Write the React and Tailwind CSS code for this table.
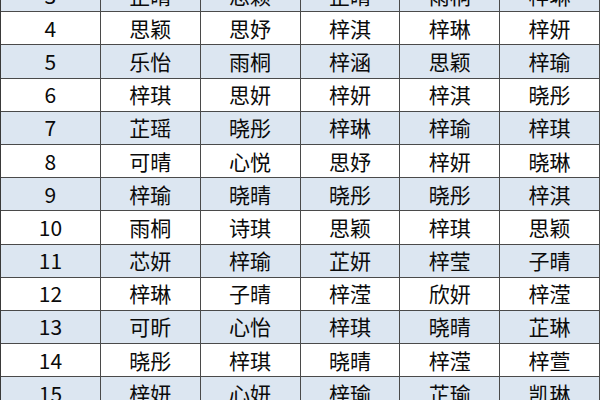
import React from "react";

const rows = [
  [3, "芷晴", "思颖", "芷晴", "雨桐", "梓琳"],
  [4, "思颖", "思妤", "梓淇", "梓琳", "梓妍"],
  [5, "乐怡", "雨桐", "梓涵", "思颖", "梓瑜"],
  [6, "梓琪", "思妍", "梓妍", "梓淇", "晓彤"],
  [7, "芷瑶", "晓彤", "梓琳", "梓瑜", "梓琪"],
  [8, "可晴", "心悦", "思妤", "梓妍", "晓琳"],
  [9, "梓瑜", "晓晴", "晓彤", "晓彤", "梓淇"],
  [10, "雨桐", "诗琪", "思颖", "梓琪", "思颖"],
  [11, "芯妍", "梓瑜", "芷妍", "梓莹", "子晴"],
  [12, "梓琳", "子晴", "梓滢", "欣妍", "梓滢"],
  [13, "可昕", "心怡", "梓琪", "晓晴", "芷琳"],
  [14, "晓彤", "梓琪", "晓晴", "梓滢", "梓萱"],
  [15, "梓妍", "心妍", "梓瑜", "芷瑜", "凯琳"],
];

export default function App() {
  return (
    <div
      className="w-[600px] h-[400px] overflow-hidden bg-white text-[#0a0a0a]"
      style={{ fontFamily: '"Noto Sans CJK SC", "Noto Sans", sans-serif' }}
    >
      <div className="-mt-[21px] border-l border-[#3a3a3a]">
        {rows.map((r, i) => (
          <div
            key={r[0]}
            className={`grid grid-cols-6 h-[33.2px] border-b border-[#4a4a4a] ${
              i % 2 === 0 ? "bg-[#dce6f1]" : "bg-white"
            }`}
          >
            {r.map((c, j) => (
              <div
                key={j}
                className="flex items-center justify-center border-r border-[#4a4a4a] text-[21px] leading-none"
              >
                {c}
              </div>
            ))}
          </div>
        ))}
      </div>
    </div>
  );
}
